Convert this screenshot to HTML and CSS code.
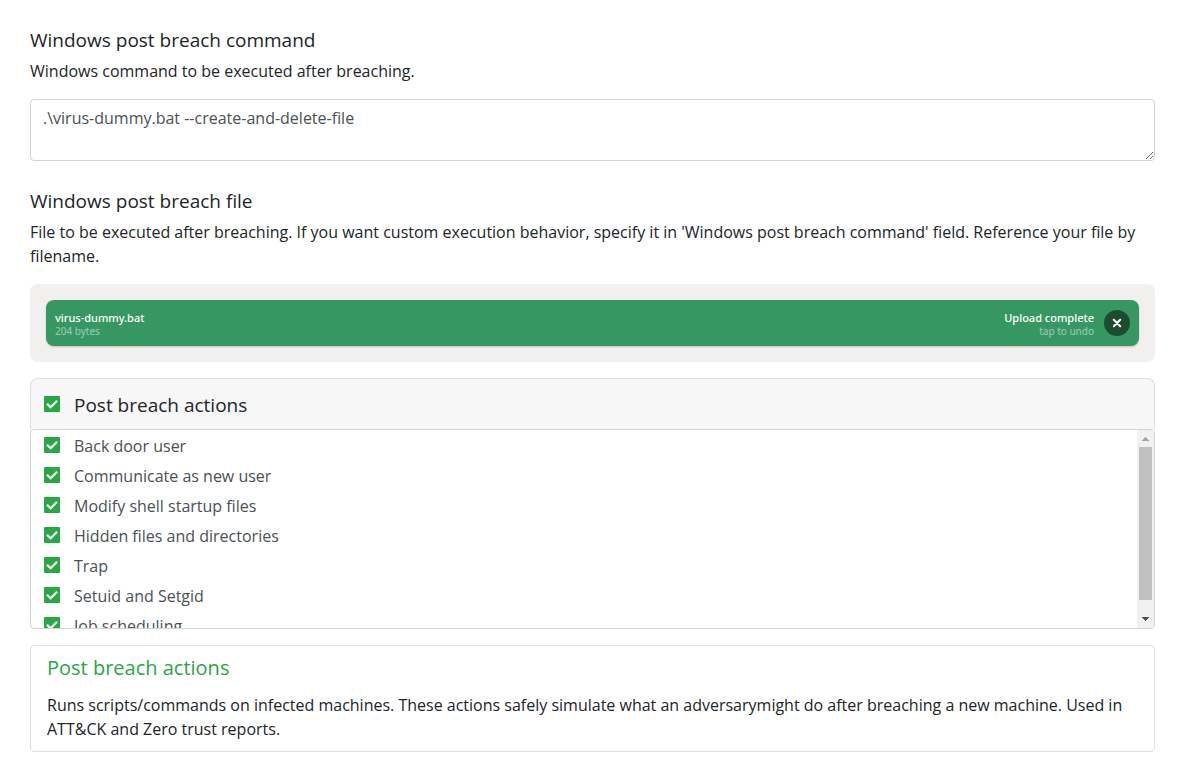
FILE: index.html
```html
<!DOCTYPE html>
<html lang="en">
<head>
<meta charset="utf-8">
<title>Post breach configuration</title>
<link rel="stylesheet" href="styles.css">
</head>
<body>
<main class="form">
  <section class="field">
    <h2 class="title"><label for="command">Windows post breach command</label></h2>
    <p class="description">Windows command to be executed after breaching.</p>
    <textarea class="command" id="command" spellcheck="false">.\virus-dummy.bat --create-and-delete-file</textarea>
  </section>

  <section class="field">
    <h2 class="title">Windows post breach file</h2>
    <p class="description">File to be executed after breaching. If you want custom execution behavior, specify it in 'Windows post breach command' field. Reference your file by filename.</p>
    <div class="upload">
      <div class="file">
        <div class="file-info">
          <span class="file-main">virus-dummy.bat</span>
          <span class="file-sub">204 bytes</span>
        </div>
        <div class="file-info file-status">
          <span class="file-main">Upload complete</span>
          <span class="file-sub">tap to undo</span>
        </div>
        <button class="file-undo" type="button" aria-label="Undo upload">
          <svg viewBox="0 0 26 26" width="26" height="26" aria-hidden="true"><path d="M9.8 9.8l6.4 6.4M16.2 9.8l-6.4 6.4" fill="none" stroke="#fff" stroke-width="2" stroke-linecap="round"/></svg>
        </button>
      </div>
    </div>
  </section>

  <section class="actions">
    <div class="actions-header">
      <input class="check" type="checkbox" id="all" checked>
      <h2 class="actions-title"><label for="all">Post breach actions</label></h2>
    </div>
    <div class="actions-body">
      <ul class="list">
        <li><label class="row"><input class="check" type="checkbox" checked><span class="row-text">Back door user</span></label></li>
        <li><label class="row"><input class="check" type="checkbox" checked><span class="row-text">Communicate as new user</span></label></li>
        <li><label class="row"><input class="check" type="checkbox" checked><span class="row-text">Modify shell startup files</span></label></li>
        <li><label class="row"><input class="check" type="checkbox" checked><span class="row-text">Hidden files and directories</span></label></li>
        <li><label class="row"><input class="check" type="checkbox" checked><span class="row-text">Trap</span></label></li>
        <li><label class="row"><input class="check" type="checkbox" checked><span class="row-text">Setuid and Setgid</span></label></li>
        <li><label class="row"><input class="check" type="checkbox" checked><span class="row-text">Job scheduling</span></label></li>
      </ul>
      <div class="scrollbar" aria-hidden="true">
        <svg class="arrow arrow-up" viewBox="0 0 17 17" width="17" height="17" shape-rendering="crispEdges"><path d="M5 11h7v-1h-1V9h-1V8H9V7H8v1H7v1H6v1H5z"/></svg>
        <div class="track"><div class="thumb"></div></div>
        <svg class="arrow" viewBox="0 0 17 17" width="17" height="17" shape-rendering="crispEdges"><path d="M5 6h7v1h-1v1h-1v1H9v1H8V9H7V8H6V7H5z"/></svg>
      </div>
    </div>
  </section>

  <section class="info">
    <h2 class="info-title">Post breach actions</h2>
    <p class="info-text">Runs scripts/commands on infected machines. These actions safely simulate what an adversarymight do after breaching a new machine. Used in ATT&amp;CK and Zero trust reports.</p>
  </section>
</main>
</body>
</html>
```
FILE: styles.css
```css
* {
  box-sizing: border-box;
}

body {
  margin: 0;
  background: #fff;
  color: #212529;
  font-family: "Open Sans", "Noto Sans", sans-serif;
  font-size: 16px;
  line-height: 24px;
}

h2,
p,
ul {
  margin: 0;
  padding: 0;
  font-weight: 400;
}

.form {
  padding: 28px 36px 24px 30px;
}

.field + .field {
  margin-top: 28px;
}

.title {
  margin-bottom: 6px;
  font-size: 19px;
  line-height: 25px;
}

.description {
  margin-bottom: 16px;
}

.command {
  display: block;
  width: 100%;
  height: 62px;
  padding: 6px 12px;
  border: 1px solid #ced4da;
  border-radius: 4px;
  background: #fff;
  color: #495057;
  font: inherit;
  resize: vertical;
}

.upload {
  padding: 16px;
  border-radius: 8px;
  background: #f1f0ef;
}

.file {
  display: flex;
  align-items: center;
  height: 46px;
  padding: 0 9px;
  border-radius: 8px;
  background: #369763;
  box-shadow: 0 1px 2px rgba(0, 0, 0, 0.2);
  color: #fff;
}

.file-info {
  display: flex;
  flex: 1;
  flex-direction: column;
  font-family: "Noto Sans", "Open Sans", sans-serif;
}

.file-main {
  font-size: 11px;
  font-weight: 500;
  line-height: 15px;
}

.file-sub {
  font-size: 10px;
  line-height: 12px;
  opacity: 0.5;
}

.file-status {
  align-items: flex-end;
  margin-right: 10px;
}

.file-undo {
  width: 26px;
  height: 26px;
  padding: 0;
  border: 0;
  border-radius: 50%;
  background: #1c4b31;
}

.file-undo svg {
  display: block;
}

.actions {
  margin-top: 16px;
}

.actions-header {
  display: flex;
  align-items: center;
  gap: 14px;
  height: 51px;
  padding: 0 13px;
  border: 1px solid #dfdfdf;
  border-bottom: 0;
  border-radius: 8px 8px 0 0;
  background: #f7f7f7;
}

.actions-title {
  padding-top: 2px;
  font-size: 19px;
  line-height: 23px;
}

.check {
  flex: none;
  appearance: none;
  width: 16px;
  height: 16px;
  margin: 0;
  border-radius: 1px;
  background: #28a745 url("data:image/svg+xml,%3Csvg xmlns='http://www.w3.org/2000/svg' viewBox='0 0 16 16'%3E%3Cpath d='M3 7.8l3.6 3.5L13.1 4.7' fill='none' stroke='white' stroke-width='2.2'/%3E%3C/svg%3E") center / 16px 16px;
}

.actions-body {
  display: flex;
  height: 200px;
  overflow: hidden;
  border: 1px solid #ced4da;
  border-radius: 4px;
}

.list {
  flex: 1;
  overflow-y: auto;
  scrollbar-width: none;
  list-style: none;
  color: #495057;
}

.row {
  display: flex;
  align-items: center;
  gap: 14px;
  height: 30px;
  padding: 0 13px;
}

.row-text {
  padding-top: 2px;
}

.scrollbar {
  display: flex;
  flex-direction: column;
  width: 17px;
  background: #f1f1f1;
}

.track {
  flex: 1;
  padding: 0 2px;
}

.thumb {
  height: 93%;
  background: #c1c1c1;
}

.arrow {
  display: block;
  fill: #505050;
}

.arrow-up {
  fill: #a3a3a3;
}

.info {
  margin-top: 16px;
  padding: 10px 16px;
  border: 1px solid #dfdfdf;
  border-radius: 4px;
}

.info-title {
  margin-bottom: 13px;
  color: #28a745;
  font-size: 20px;
  line-height: 24px;
}
```
